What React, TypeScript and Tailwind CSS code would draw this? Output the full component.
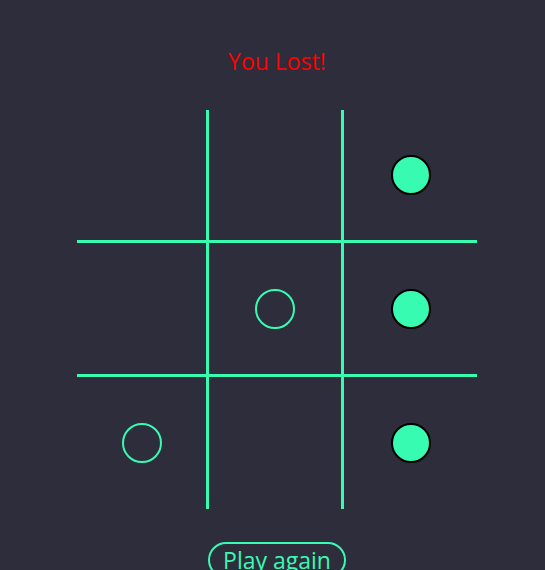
import React from "react";

type Mark = "x" | "o" | null;

const board: Mark[] = [null, null, "x", null, "o", "x", "o", null, "x"];

const Cell = ({ mark, idx }: { mark: Mark; idx: number }) => {
  const col = idx % 3;
  const row = Math.floor(idx / 3);
  return (
    <div
      className={
        "flex items-center justify-center border-[#38fbb2] " +
        (col < 2 ? "border-r-[3px] " : "") +
        (row < 2 ? "border-b-[3px]" : "")
      }
    >
      {mark === "x" && (
        <div className="w-[40px] h-[40px] rounded-full bg-[#38fbb2] border-2 border-black" />
      )}
      {mark === "o" && (
        <div className="w-[40px] h-[40px] rounded-full border-2 border-[#38fbb2]" />
      )}
    </div>
  );
};

export default function App() {
  return (
    <div className="min-h-screen bg-[#2d2d3b] font-['Open_Sans',sans-serif] overflow-hidden">
      <div className="flex flex-col items-center pl-[9px] pt-[46px]">
        <h1 className="text-[23px] leading-[30px] text-[#ff0000]">You Lost!</h1>
        <div className="mt-[34px] grid grid-cols-[132px_135px_133px] grid-rows-[133px_134px_132px]">
          {board.map((m, i) => (
            <Cell key={i} mark={m} idx={i} />
          ))}
        </div>
        <button className="mt-[33px] px-[13px] border-2 border-[#38fbb2] rounded-full text-[23px] leading-[32px] text-[#38fbb2]">
          Play again
        </button>
      </div>
    </div>
  );
}
